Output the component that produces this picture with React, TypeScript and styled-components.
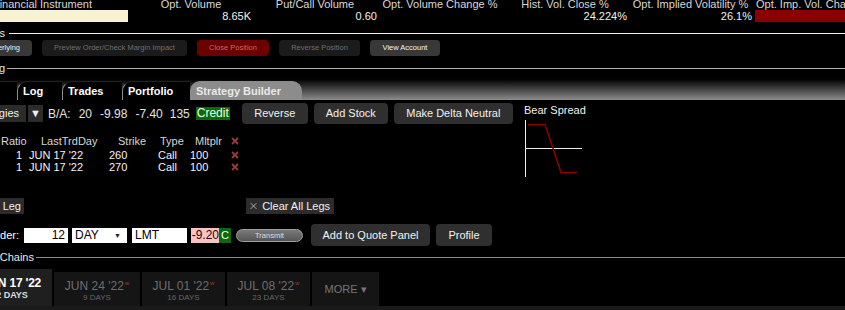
import React from "react";
import styled, { createGlobalStyle } from "styled-components";

const GlobalStyle = createGlobalStyle`
  html, body {
    margin: 0;
    padding: 0;
    background: #000;
  }
  body {
    font-family: "Liberation Sans", Arial, sans-serif;
    color: #fff;
  }
`;

const Page = styled.div`
  width: 845px;
  height: 310px;
  overflow: hidden;
  background: #000;
  display: flex;
  flex-direction: column;
`;

// clips its content on the left, like the screenshot edge does
const Clip = styled.div<{ $w: number }>`
  width: ${(p) => p.$w}px;
  flex: none;
  display: flex;
  justify-content: flex-end;
  overflow: hidden;
  white-space: nowrap;
  & > * {
    flex-shrink: 0;
  }
`;

/* ---------- summary ---------- */
const Summary = styled.div`
  display: grid;
  grid-template-columns: 130px 122px 126px 124px 126px 125px 92px;
  grid-template-rows: 12px 12px;
  margin-top: -2px;
  font-size: 11px;
  line-height: 12px;
`;

const SumLabel = styled.div<{ $left?: boolean }>`
  color: #d8d8d8;
  text-align: ${(p) => (p.$left ? "left" : "center")};
  padding-left: ${(p) => (p.$left ? 3 : 0)}px;
  white-space: nowrap;
  overflow: hidden;
`;

const SumValue = styled.div`
  text-align: right;
  padding-right: 1px;
  color: #f2f2f2;
`;

const CreamBox = styled.div`
  width: 128px;
  height: 12px;
  background: #f6f3d3;
`;

const RedBar = styled.div`
  margin-left: 2px;
  height: 12px;
  background: #8b0000;
`;

/* ---------- section titles ---------- */
const SectionTitle = styled.div<{ $line: string; $gap: number }>`
  display: flex;
  align-items: center;
  gap: ${(p) => p.$gap}px;
  height: 12px;
  font-size: 11px;
  line-height: 12px;
  color: #e8e8e8;
  &::after {
    content: "";
    flex: 1;
    height: 1px;
    background: ${(p) => p.$line};
  }
`;

/* ---------- action buttons ---------- */
const ActionRow = styled.div`
  display: flex;
  gap: 10px;
  height: 16px;
  margin-top: 1px;
`;

type Tone = "normal" | "off" | "danger";

const ActionBtn = styled.div<{ $tone: Tone; $w?: number }>`
  height: 16px;
  width: ${(p) => (p.$w ? `${p.$w}px` : "auto")};
  padding: 0 12px 0 6px;
  box-sizing: border-box;
  border-radius: 4px;
  font-size: 7.5px;
  line-height: 16px;
  text-align: center;
  white-space: nowrap;
  background: ${(p) =>
    p.$tone === "danger" ? "#6c0000" : p.$tone === "off" ? "#1b1b1b" : "#383838"};
  color: ${(p) =>
    p.$tone === "danger" ? "#c06a6a" : p.$tone === "off" ? "#6f6f6f" : "#f4f4f4"};
  ${(p) => (p.$w ? "padding: 0;" : "")}
`;

/* ---------- tabs ---------- */
const TabStrip = styled.div`
  height: 26px;
  display: flex;
  align-items: flex-end;
  background: linear-gradient(to bottom, #000 0%, #000 20%, #8c8c8c 100%);
`;

const Tab = styled.div<{ $active?: boolean; $w: number }>`
  width: ${(p) => p.$w}px;
  height: 19px;
  box-sizing: border-box;
  padding-left: 5px;
  font-size: 11px;
  font-weight: bold;
  line-height: 19px;
  white-space: nowrap;
  background: ${(p) => (p.$active ? "#8c8c8c" : "#000")};
  color: ${(p) => (p.$active ? "#e9e9e9" : "#fff")};
  border-left: 1px solid #8c8c8c;
  border-top: 1px solid ${(p) => (p.$active ? "#8c8c8c" : "#222")};
  border-top-left-radius: 10px;
  border-top-right-radius: ${(p) => (p.$active ? "10px" : "0")};
`;

/* ---------- main area ---------- */
const Main = styled.div`
  display: flex;
  height: 150px;
`;

const Builder = styled.div`
  width: 518px;
  display: flex;
  flex-direction: column;
`;

const StratRow = styled.div`
  display: flex;
  align-items: center;
  height: 21px;
  margin-top: 3px;
  font-size: 12px;
  color: #e4e4e4;
`;

const DarkBox = styled.div<{ $w?: number; $h: number; $pr?: number }>`
  height: ${(p) => p.$h}px;
  width: ${(p) => (p.$w ? `${p.$w}px` : "auto")};
  padding: 0 ${(p) => p.$pr ?? 4}px 0 4px;
  box-sizing: border-box;
  background: #2c2c2c;
  color: #f0f0f0;
  font-size: 11px;
  line-height: ${(p) => p.$h}px;
  display: flex;
  align-items: center;
  justify-content: center;
  gap: 5px;
  white-space: nowrap;
`;

const Num = styled.span<{ $ml: number }>`
  margin-left: ${(p) => p.$ml}px;
`;

const CreditTag = styled.span`
  margin-left: 6px;
  height: 13px;
  width: 34px;
  background: #0b6b0b;
  color: #eaffea;
  font-size: 12px;
  line-height: 13px;
  text-align: center;
`;

const Btn = styled.div<{ $w: number; $h: number }>`
  width: ${(p) => p.$w}px;
  height: ${(p) => p.$h}px;
  border-radius: 4px;
  background: #2f2f2f;
  color: #f2f2f2;
  font-size: 11px;
  line-height: ${(p) => p.$h}px;
  text-align: center;
  white-space: nowrap;
  flex: none;
`;

const BtnGroup = styled.div`
  display: flex;
  gap: 6px;
  margin-left: 12px;
`;

const Legs = styled.div`
  display: grid;
  grid-template-columns: 28px 72px 50px 38px 38px 14px;
  grid-template-rows: 14px 12px 12px;
  margin-top: 11px;
  font-size: 11px;
  line-height: 12px;
`;

const Head = styled.div<{ $pl?: number }>`
  color: #d6d6d6;
  padding-left: ${(p) => p.$pl ?? 0}px;
  white-space: nowrap;
`;

const Cell = styled.div<{ $pl?: number; $pr?: number; $align?: string }>`
  color: #f4f4f4;
  padding-left: ${(p) => p.$pl ?? 0}px;
  padding-right: ${(p) => p.$pr ?? 0}px;
  text-align: ${(p) => p.$align ?? "left"};
  white-space: nowrap;
`;

const XMark = styled.div`
  display: flex;
  align-items: flex-start;
  padding: 2px 0 0 5px;
`;

const LegRow = styled.div`
  display: flex;
  align-items: center;
  height: 16px;
  margin-top: 25px;
`;

const OrderRow = styled.div`
  display: flex;
  align-items: center;
  height: 22px;
  margin-top: 10px;
  font-size: 11px;
`;

const Field = styled.div<{ $w: number; $align?: string; $ml: number }>`
  width: ${(p) => p.$w}px;
  height: 15px;
  margin-left: ${(p) => p.$ml}px;
  box-sizing: border-box;
  padding: 0 3px;
  background: #fff;
  color: #000;
  font-size: 12px;
  line-height: 15px;
  display: flex;
  justify-content: ${(p) => (p.$align === "right" ? "flex-end" : "space-between")};
  align-items: center;
`;

const Caret = styled.span`
  font-size: 7px;
  color: #222;
  margin-right: 3px;
`;

const PriceTag = styled.div`
  margin-left: 4px;
  width: 28px;
  height: 15px;
  background: #f7c4c4;
  color: #300;
  font-size: 12px;
  line-height: 15px;
  text-align: right;
`;

const CTag = styled.div`
  width: 12px;
  height: 15px;
  background: #0b6b0b;
  color: #fff;
  font-size: 11px;
  line-height: 15px;
  text-align: center;
`;

const Transmit = styled.div`
  margin-left: 5px;
  width: 67px;
  height: 13px;
  box-sizing: border-box;
  border-radius: 7px;
  border: 1px solid #a0a0a0;
  background: linear-gradient(to bottom, #7a7a7a, #555);
  color: #dedede;
  font-size: 7.5px;
  line-height: 11px;
  text-align: center;
`;

const Diagram = styled.div`
  display: flex;
  flex-direction: column;
  padding-left: 6px;
  padding-top: 4px;
  font-size: 11px;
  color: #f2f2f2;
  gap: 4px;
`;

/* ---------- expiries ---------- */
const ExpiryRow = styled.div`
  display: flex;
  align-items: flex-end;
  gap: 2px;
  height: 38px;
  margin-top: 5px;
  border-bottom: 4px solid #1a1a1a;
`;

const Expiry = styled.div<{ $active?: boolean; $w: number }>`
  width: ${(p) => p.$w}px;
  height: ${(p) => (p.$active ? 37 : 34)}px;
  background: ${(p) => (p.$active ? "#1f1f1f" : "#151515")};
  display: flex;
  flex-direction: column;
  align-items: center;
  justify-content: center;
  color: ${(p) => (p.$active ? "#fff" : "#6e6e6e")};
  flex: none;
`;

const ExpDate = styled.div<{ $active?: boolean }>`
  font-size: 12px;
  line-height: 14px;
  letter-spacing: ${(p) => (p.$active ? "-0.2px" : "0")};
  font-weight: ${(p) => (p.$active ? "bold" : "normal")};
  white-space: nowrap;
`;

const ExpDays = styled.div<{ $active?: boolean }>`
  font-size: ${(p) => (p.$active ? 9 : 8)}px;
  line-height: 10px;
  font-weight: ${(p) => (p.$active ? "bold" : "normal")};
  color: ${(p) => (p.$active ? "#ddd" : "#666")};
`;

const Weekly = styled.sup`
  font-size: 6px;
  color: #b03030;
  vertical-align: 5px;
  margin-left: 1px;
`;

const More = styled.div`
  width: 67px;
  height: 34px;
  background: #151515;
  color: #777;
  font-size: 11px;
  line-height: 34px;
  text-align: center;
`;

const RemoveIcon = () => (
  <svg width="8" height="8" viewBox="0 0 8 8">
    <path d="M1 1 L7 7 M7 1 L1 7" stroke="#9c3a3a" strokeWidth="1.8" />
  </svg>
);

const legs = [
  { ratio: 1, day: "JUN 17 '22", strike: 260, type: "Call", mult: 100 },
  { ratio: 1, day: "JUN 17 '22", strike: 270, type: "Call", mult: 100 },
];

const expiries = [
  { date: "JUN 24 '22", days: "9 DAYS" },
  { date: "JUL 01 '22", days: "16 DAYS" },
  { date: "JUL 08 '22", days: "23 DAYS" },
];

export default function App() {
  return (
    <Page>
      <GlobalStyle />
      <Summary>
        <Clip $w={92}>
          <SumLabel>Financial Instrument</SumLabel>
        </Clip>
        <SumLabel>Opt. Volume</SumLabel>
        <SumLabel>Put/Call Volume</SumLabel>
        <SumLabel>Opt. Volume Change %</SumLabel>
        <SumLabel>Hist. Vol. Close %</SumLabel>
        <SumLabel>Opt. Implied Volatility %</SumLabel>
        <SumLabel $left>Opt. Imp. Vol. Change %</SumLabel>
        <CreamBox />
        <SumValue>8.65K</SumValue>
        <SumValue>0.60</SumValue>
        <SumValue />
        <SumValue>24.224%</SumValue>
        <SumValue>26.1%</SumValue>
        <RedBar />
      </Summary>

      <div style={{ height: 5 }} />
      <SectionTitle $line="#f0f0f0" $gap={4}>
        <Clip $w={5}>
          <span>Positions</span>
        </Clip>
      </SectionTitle>

      <ActionRow>
        <Clip $w={32}>
          <ActionBtn $tone="normal">Roll Underlying</ActionBtn>
        </Clip>
        <ActionBtn $tone="off" $w={145}>Preview Order/Check Margin Impact</ActionBtn>
        <ActionBtn $tone="danger" $w={72}>Close Position</ActionBtn>
        <ActionBtn $tone="off" $w={81}>Reverse Position</ActionBtn>
        <ActionBtn $tone="normal" $w={70}>View Account</ActionBtn>
      </ActionRow>

      <div style={{ height: 6 }} />
      <SectionTitle $line="#b0b0b0" $gap={2}>
        <Clip $w={5}>
          <span>Trading</span>
        </Clip>
      </SectionTitle>

      <TabStrip>
        <Clip $w={17}>
          <Tab $w={60}>Orders</Tab>
        </Clip>
        <Tab $w={45}>Log</Tab>
        <Tab $w={60}>Trades</Tab>
        <Tab $w={68}>Portfolio</Tab>
        <Tab $w={112} $active>
          Strategy Builder
        </Tab>
      </TabStrip>

      <Main>
        <Builder>
          <StratRow>
            <Clip $w={26}>
              <DarkBox $h={17} $pr={7}>Strategies</DarkBox>
            </Clip>
            <DarkBox $h={17} $w={15} style={{ marginLeft: 2 }}>
              ▼
            </DarkBox>
            <Num $ml={5}>B/A:</Num>
            <Num $ml={8}>20</Num>
            <Num $ml={8}>-9.98</Num>
            <Num $ml={8}>-7.40</Num>
            <Num $ml={7}>135</Num>
            <CreditTag>Credit</CreditTag>
            <BtnGroup>
              <Btn $w={66} $h={21}>Reverse</Btn>
              <Btn $w={74} $h={21}>Add Stock</Btn>
              <Btn $w={119} $h={21}>Make Delta Neutral</Btn>
            </BtnGroup>
          </StratRow>

          <Legs>
            <Head $pl={1}>Ratio</Head>
            <Head $pl={13}>LastTrdDay</Head>
            <Head $pl={18}>Strike</Head>
            <Head $pl={10}>Type</Head>
            <Head $pl={7}>Mltplr</Head>
            <XMark>
              <RemoveIcon />
            </XMark>
            {legs.map((l, i) => (
              <React.Fragment key={i}>
                <Cell $align="right" $pr={6}>{l.ratio}</Cell>
                <Cell $pl={1}>{l.day}</Cell>
                <Cell $pl={9}>{l.strike}</Cell>
                <Cell $pl={8}>{l.type}</Cell>
                <Cell $pl={2}>{l.mult}</Cell>
                <XMark>
                  <RemoveIcon />
                </XMark>
              </React.Fragment>
            ))}
          </Legs>

          <LegRow>
            <Clip $w={24}>
              <DarkBox $h={16} $pr={3}>Add Manual Leg</DarkBox>
            </Clip>
            <DarkBox $h={16} $w={88} style={{ marginLeft: 222 }}>
              <svg width="10" height="10" viewBox="0 0 10 10">
                <path d="M1 1 L9 9 M9 1 L1 9" stroke="#d0d0d0" strokeWidth="1.1" />
              </svg>
              Clear All Legs
            </DarkBox>
          </LegRow>

          <OrderRow>
            <Clip $w={19}>
              <span>Order:</span>
            </Clip>
            <Field $w={44} $ml={5} $align="right">12</Field>
            <Field $w={55} $ml={4}>
              DAY
              <Caret>▼</Caret>
            </Field>
            <Field $w={55} $ml={5}>LMT</Field>
            <PriceTag>-9.20</PriceTag>
            <CTag>C</CTag>
            <Transmit>Transmit</Transmit>
            <Btn $w={119} $h={22} style={{ marginLeft: 8 }}>
              Add to Quote Panel
            </Btn>
            <Btn $w={56} $h={22} style={{ marginLeft: 6 }}>
              Profile
            </Btn>
          </OrderRow>
        </Builder>

        <Diagram>
          <span>Bear Spread</span>
          <svg width="60" height="60" viewBox="0 0 60 60">
            <path d="M1.5 0 V57" stroke="#f0f0f0" strokeWidth="1" />
            <path d="M1 28.5 H58" stroke="#f0f0f0" strokeWidth="1" />
            <path d="M4 4.5 H21 L37 52.5 H53" stroke="#8b0000" strokeWidth="1.5" fill="none" />
          </svg>
        </Diagram>
      </Main>

      <div style={{ height: 1 }} />
      <SectionTitle $line="#8c8c8c" $gap={2}>
        <Clip $w={34}>
          <span>Option Chains</span>
        </Clip>
      </SectionTitle>

      <ExpiryRow>
        <Clip $w={52}>
          <Expiry $w={80} $active>
            <ExpDate $active>JUN 17 '22</ExpDate>
            <ExpDays $active>2 DAYS</ExpDays>
          </Expiry>
        </Clip>
        {expiries.map((e) => (
          <Expiry key={e.date} $w={e.date === "JUN 24 '22" ? 86 : 83}>
            <ExpDate>
              {e.date}
              <Weekly>w</Weekly>
            </ExpDate>
            <ExpDays>{e.days}</ExpDays>
          </Expiry>
        ))}
        <More>MORE ▾</More>
      </ExpiryRow>
    </Page>
  );
}
